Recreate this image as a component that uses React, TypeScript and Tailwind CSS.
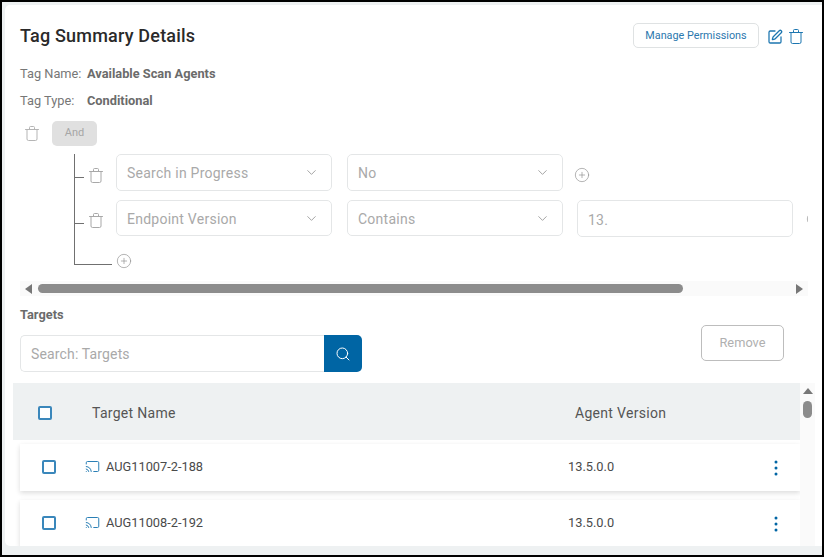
import { Cast, ChevronDown, CirclePlus, Search, SquarePen } from 'lucide-react'

const targets = [
  { name: 'AUG11007-2-188', version: '13.5.0.0' },
  { name: 'AUG11008-2-192', version: '13.5.0.0' },
]

function TrashIcon({ className }: { className?: string }) {
  return (
    <svg width="14" height="15" viewBox="0 0 14 15" fill="none" stroke="currentColor" className={className}>
      <path d="M0.5 3.5h13" strokeLinecap="round" />
      <path d="M4.5 3.5V1.5a1 1 0 0 1 1-1h3a1 1 0 0 1 1 1v2" />
      <path d="M2 3.5v9.5a1.5 1.5 0 0 0 1.5 1.5h7a1.5 1.5 0 0 0 1.5-1.5V3.5" />
    </svg>
  )
}

function Select({ label, h = 'h-[37px]', text = 'pt-[2px]' }: { label: string; h?: string; text?: string }) {
  return (
    <div className={`${h} w-[216px] shrink-0 flex items-center justify-between pl-[10px] pr-[12px] bg-white border border-[#e4e6e7] rounded-[5px]`}>
      <span className={`${text} text-[14px] tracking-[0.25px] text-[#a9a9a9]`}>{label}</span>
      <ChevronDown size={15} strokeWidth={1.25} className="text-[#8a8a8a]" />
    </div>
  )
}

function Dots() {
  return (
    <svg width="4" height="16" viewBox="0 0 4 16" className="text-[#0065a4]" fill="currentColor">
      <circle cx="2" cy="2" r="1.5" />
      <circle cx="2" cy="8" r="1.5" />
      <circle cx="2" cy="14" r="1.5" />
    </svg>
  )
}

function Checkbox() {
  return <div className="w-[14px] h-[14px] shrink-0 rounded-[2px] border-2 border-[#3a87bb] bg-white" />
}

export default function App() {
  return (
    <div className="w-[824px] h-[557px] overflow-hidden border-2 border-black bg-[#eef1f2] pt-[3px] pl-[3px] font-['Roboto',sans-serif]">
      <div className="h-[541px] flex flex-col overflow-hidden bg-white rounded-l-[5px] pl-[15px] pr-[14px]">
        {/* header */}
        <div className="mt-[18px] h-[25px] flex items-center justify-between pr-[5px]">
          <h1 className="text-[18px] tracking-[0.2px] font-medium leading-none text-[#2a2a2a]">Tag Summary Details</h1>
          <div className="flex items-center">
            <button className="w-[126px] h-[25px] pt-px text-[10.8px] text-[#2b78ae] bg-white border border-[#dfe2e3] rounded-[5px]">
              Manage Permissions
            </button>
            <SquarePen size={16} strokeWidth={1.9} className="ml-[8px] mt-[2px] text-[#1c76b0]" />
            <TrashIcon className="ml-[6px] mt-[1px] text-[#1c76b0]" />
          </div>
        </div>

        <div className="mt-[15px] h-[20px] pt-[2px] flex items-center text-[12.8px] text-[#777]">
          <span className="w-[67px]">Tag Name:</span>
          <span className="font-bold text-[#6b6b6b]">Available Scan Agents</span>
        </div>
        <div className="mt-[7px] h-[20px] pt-[2px] flex items-center text-[12.8px] text-[#777]">
          <span className="w-[67px]">Tag Type:</span>
          <span className="font-bold text-[#6b6b6b]">Conditional</span>
        </div>

        {/* rule tree */}
        <div className="mt-[11px] w-[788px] pb-[6px] overflow-hidden">
          <div className="h-[25px] flex items-center">
            <TrashIcon className="ml-[5px] text-[#b5b5b5]" />
            <div className="ml-[13px] w-[45px] h-[25px] flex items-center justify-center rounded-[5px] bg-[#e0e0e0] text-[11px] text-[#a6a6a6]">
              And
            </div>
          </div>
          <div className="mt-[8px] ml-[54px] w-[730px] border-l border-[#707070]">
            <div className="flex">
              <div className="mt-[23px] w-[9px] h-px shrink-0 bg-[#707070]" />
              <TrashIcon className="mt-[14px] ml-[5px] shrink-0 text-[#a8a8a8]" />
              <div className="ml-[13px] flex">
                <Select label="Search in Progress" />
                <div className="ml-[15px]">
                  <Select label="No" />
                </div>
                <CirclePlus size={16} strokeWidth={1} className="ml-[11px] mt-[13px] shrink-0 text-[#8f8f8f]" />
              </div>
            </div>
            <div className="mt-[9px] flex">
              <div className="mt-[23px] w-[9px] h-px shrink-0 bg-[#707070]" />
              <TrashIcon className="mt-[13px] ml-[5px] shrink-0 text-[#a8a8a8]" />
              <div className="ml-[13px] flex">
                <Select label="Endpoint Version" h="h-[36px]" text="pt-[3px]" />
                <div className="ml-[15px]">
                  <Select label="Contains" h="h-[36px]" text="pt-[3px]" />
                </div>
                <div className="ml-[14px] w-[216px] h-[37px] shrink-0 flex items-center pl-[10px] pt-[3px] border border-[#e4e6e7] rounded-[5px] text-[14px] tracking-[0.25px] text-[#a9a9a9]">
                  13.
                </div>
                <CirclePlus size={16} strokeWidth={1} className="ml-[13px] mt-[11px] shrink-0 text-[#8f8f8f]" />
              </div>
            </div>
            <div className="h-[28px] flex items-end">
              <div className="w-[37px] h-px bg-[#707070]" />
              <CirclePlus size={16} strokeWidth={1} className="ml-[4px] mb-[-4px] text-[#8f8f8f]" />
            </div>
          </div>
        </div>

        {/* horizontal scrollbar */}
        <div className="mt-[11px] w-[788px] h-[15px] shrink-0 flex items-center bg-[#fafafa]">
          <div className="ml-[5px] w-0 h-0 border-y-[5px] border-y-transparent border-r-[7px] border-r-[#777]" />
          <div className="ml-[6px] w-[645px] h-[9px] rounded-full bg-[#8c8c8c]" />
          <div className="ml-auto mr-[5px] w-0 h-0 border-y-[5px] border-y-transparent border-l-[7px] border-l-[#777]" />
        </div>

        {/* targets */}
        <div className="mt-[9px] h-[20px] flex items-center text-[12.8px] font-bold text-[#6b6b6b]">Targets</div>
        <div className="flex justify-between items-start pr-[24px]">
          <div className="mt-[10px] flex">
            <div className="w-[304px] h-[37px] flex items-center pl-[10px] pt-[2px] border border-r-0 border-[#e4e6e7] rounded-l-[5px] text-[14px] tracking-[0.15px] text-[#a9a9a9]">
              Search: Targets
            </div>
            <div className="w-[38px] h-[37px] flex items-center justify-center bg-[#0065a4] rounded-r-[5px]">
              <Search size={16} strokeWidth={1.5} className="text-white" />
            </div>
          </div>
          <button className="w-[83px] h-[36px] text-[12.8px] text-[#b0b0b0] border border-[#bdbdbd] rounded-[5px] bg-white">
            Remove
          </button>
        </div>

        {/* table */}
        <div className="mt-[11px] -mx-[7px] flex h-[163px] shrink-0 overflow-hidden">
          <div className="w-[787px] shrink-0">
            <div className="h-[57px] pt-[2px] flex items-center bg-[#eef1f2] text-[14px] tracking-[0.3px] text-[#555]">
              <div className="ml-[25px]">
                <Checkbox />
              </div>
              <span className="ml-[40px] mt-[2px] w-[483px]">Target Name</span>
              <span className="mt-[2px]">Agent Version</span>
            </div>
            <div className="pl-[7px]">
              {targets.map((t) => (
                <div
                  key={t.name}
                  className="mt-[4px] mb-[9px] h-[47px] flex items-center bg-white shadow-[0_2px_5px_rgba(0,0,0,0.14)] text-[12.8px] text-[#4a4a4a]"
                >
                  <div className="ml-[22px] -mt-[2px]">
                    <Checkbox />
                  </div>
                  <Cast size={15} strokeWidth={1.5} className="ml-[29px] -mt-[2px] text-[#1c76b0]" />
                  <span className="ml-[6px] -mt-[2px] w-[462px]">{t.name}</span>
                  <span className="-mt-[2px]">{t.version}</span>
                  <div className="ml-auto mr-[22px]">
                    <Dots />
                  </div>
                </div>
              ))}
            </div>
          </div>
          <div className="w-[15px] flex flex-col items-center bg-[#fafafa] pt-[5px]">
            <div className="w-0 h-0 border-x-[5px] border-x-transparent border-b-[6px] border-b-[#777]" />
            <div className="mt-[7px] w-[9px] h-[17px] rounded-full bg-[#8c8c8c]" />
          </div>
        </div>
      </div>
    </div>
  )
}
